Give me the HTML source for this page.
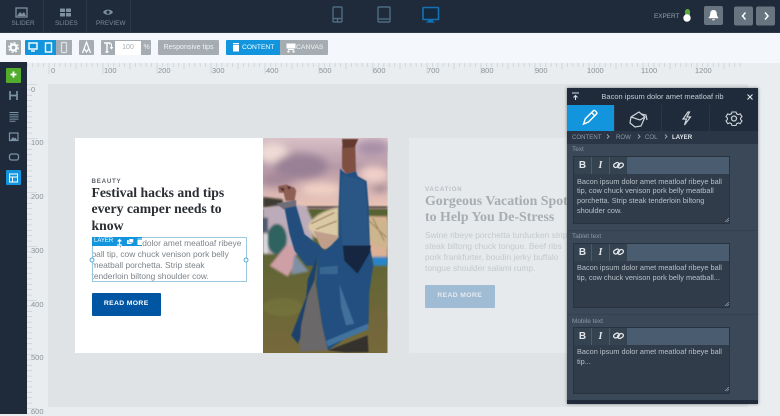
<!DOCTYPE html>
<html><head><meta charset="utf-8">
<style>
html,body{margin:0;padding:0}
body{width:780px;height:414px;overflow:hidden;position:relative;background:#e9edf0;font-family:"Liberation Sans",sans-serif}
.a{position:absolute}
.t{position:absolute;white-space:nowrap}
.serif{font-family:"Liberation Serif",serif;font-weight:700}
.g{background:#a6adb2}
.rl{position:absolute;font-size:7.5px;color:#8a9196}
.lb{position:absolute;left:572px;font-size:6.4px;color:#8b97a3}
.btn{position:absolute;width:17px;height:17px;background:#35424f;color:#dfe5ea;text-align:center;line-height:17px;font-size:10px;font-weight:700}
.txt{margin:0;position:absolute;left:3px;top:19.5px;font-size:7.35px;line-height:9.8px;color:#b7c0c9;white-space:nowrap}
.box{position:absolute;left:573px;width:157px;background:#303c4a;border:1px solid #28333f;box-sizing:border-box}
</style></head><body>

<!-- top bar -->
<div class="a" style="left:0;top:0;width:780px;height:32px;background:#1f2b3a"></div>
<div class="a" style="left:0;top:32px;width:780px;height:1px;background:#2e3a48"></div>
<div class="a" style="left:43px;top:0;width:1px;height:32px;background:#2c3847"></div>
<div class="a" style="left:86px;top:0;width:1px;height:32px;background:#2c3847"></div>
<div class="a" style="left:130px;top:0;width:1px;height:32px;background:#2c3847"></div>
<svg class="a" style="left:0;top:0" width="780" height="33">
 <rect x="16" y="8" width="11" height="9" fill="none" stroke="#7f909f" stroke-width="1.300"/>
 <path d="M17 16l3-4 2 2 2-2 2 4z" fill="#7f909f"/>
 <g fill="#7f909f"><rect x="60" y="8.500" width="5" height="3.500" rx=".5"/><rect x="66" y="8.500" width="5" height="3.500" rx=".5"/><rect x="60" y="13" width="5" height="3.500" rx=".5"/><rect x="66" y="13" width="5" height="3.500" rx=".5"/></g>
 <path d="M103 12.200c2-3.400 8-3.400 10 0-2 3.400-8 3.400-10 0z" fill="#7f909f"/><circle cx="108" cy="12.200" r="1.600" fill="#1f2b3a"/>
 <g fill="none" stroke="#4f6b82" stroke-width="1.400">
  <rect x="333" y="7" width="9" height="15" rx="1"/><path d="M333 18.500h9M337.500 18.500v3.500"/>
  <rect x="378" y="7" width="12" height="15" rx="1"/><path d="M378 19h12"/>
 </g>
 <rect x="423" y="7.500" width="15.500" height="12" rx=".5" fill="#14293e" stroke="#1670b4" stroke-width="1.600"/>
 <path d="M428 20h5v2h-5z" fill="#1670b4"/>
 <rect x="426.500" y="21.500" width="8" height="1.200" fill="#1670b4"/>
 <rect x="685" y="9" width="5" height="11" rx="2.500" fill="#5fa83a"/><circle cx="687" cy="18" r="3.700" fill="#fff"/>
 <rect x="704" y="6" width="19" height="19" rx="2" fill="#68747f"/>
 <path d="M713.500 10c-2.300 0-3.300 1.800-3.300 3.800 0 2-.7 3-1.500 3.700v.8h9.600v-.8c-.8-.7-1.500-1.700-1.500-3.700 0-2-1-3.800-3.300-3.800z" fill="#fff"/><path d="M712 19.200h3c0 1.600-3 1.600-3 0z" fill="#fff"/>
 <rect x="734" y="6.500" width="19" height="19" rx="2" fill="#68747f"/>
 <rect x="756" y="6.500" width="19" height="19" rx="2" fill="#68747f"/>
 <path d="M745.500 12.500l-3 3.500 3 3.500M765 12.500l3 3.500-3 3.500" fill="none" stroke="#fff" stroke-width="1.500"/>
</svg>
<div class="t" style="left:11.500px;top:20px;font-size:6.400px;color:#7c8a97">SLIDER</div>
<div class="t" style="left:55px;top:20px;font-size:6.400px;color:#7c8a97">SLIDES</div>
<div class="t" style="left:96px;top:20px;font-size:6.400px;color:#7c8a97">PREVIEW</div>
<div class="t" style="left:654px;top:12.500px;font-size:6.400px;color:#94a0ab">EXPERT</div>

<!-- toolbar -->
<div class="a" style="left:0;top:33px;width:780px;height:29.500px;background:#f4f7fb"></div>
<div class="a g" style="left:6px;top:40px;width:15px;height:15px;border-radius:1px"></div>
<div class="a" style="left:25px;top:40px;width:31px;height:15px;background:#1295dd;border-radius:1px 0 0 1px"></div>
<div class="a g" style="left:56px;top:40px;width:16px;height:15px"></div>
<div class="a g" style="left:79px;top:40px;width:15px;height:15px;border-radius:1px"></div>
<div class="a g" style="left:101px;top:40px;width:50px;height:15px;border-radius:1px"></div>
<div class="a" style="left:115px;top:41px;width:26px;height:14px;background:#fff;color:#a8adb2;font-size:7px;line-height:14px;text-align:center">100</div>
<div class="t" style="left:143.500px;top:43.500px;font-size:7px;color:#f1f3f4">%</div>
<div class="a g" style="left:158px;top:40px;width:61px;height:15px;border-radius:1px;color:#eef1f3;font-size:7.100px;line-height:15px;text-align:center;white-space:nowrap">Responsive tips</div>
<div class="a" style="left:226px;top:40px;width:54px;height:15px;background:#1295dd;border-radius:1px 0 0 1px"></div>
<div class="a g" style="left:280px;top:40px;width:48px;height:15px;border-radius:0 1px 1px 0"></div>
<div class="t" style="left:242px;top:43.500px;font-size:6.700px;color:#fff">CONTENT</div>
<div class="t" style="left:296px;top:43.500px;font-size:6.800px;color:#f1f3f4">CANVAS</div>
<svg class="a" style="left:0;top:33px" width="340" height="30">
 <circle cx="13.500" cy="14.500" r="3" fill="none" stroke="#fff" stroke-width="2.200"/><circle cx="13.500" cy="14.500" r="4.800" fill="none" stroke="#fff" stroke-width="1.200" stroke-dasharray="2 1.770"/>
 <rect x="29" y="10" width="8" height="6" fill="none" stroke="#fff" stroke-width="1.400"/><path d="M31 18h4" stroke="#fff" stroke-width="1.400"/>
 <rect x="45.500" y="10" width="6" height="9" fill="none" stroke="#fff" stroke-width="1.400"/>
 <rect x="61.500" y="9.500" width="5" height="10" rx="1" fill="none" stroke="#dfe3e6" stroke-width="1.200"/>
 <path d="M82.500 20l4-11 4 11M84.500 16l2 3 2-3" fill="none" stroke="#fff" stroke-width="1.200"/>
 <path d="M104 10h6v1.500M107 10v9M105.500 19h3" fill="none" stroke="#fff" stroke-width="1.400"/><path d="M111.500 10.500v5m-1.300-1.500l1.300 1.800 1.300-1.800" fill="none" stroke="#fff" stroke-width="1"/>
 <path d="M233 12h6v6.500h-6zM233 10h6v1.200h-6z" fill="#fff"/>
 <path d="M286.500 10.500h9v5h-9zM288 16h6v1h-6zM287.500 17.500h2v2h-2zM292.500 17.500h2v2h-2z" fill="#fff"/>
</svg>

<!-- ruler -->
<div class="a" style="left:27px;top:63px;width:753px;height:21px;background:#e9edf0"></div>
<svg class="a" style="left:27px;top:62px" width="753" height="22">
 <defs><pattern id="rx" x="21.500" y="0" width="54" height="22" patternUnits="userSpaceOnUse">
  <path fill="none" stroke="#cdd2d5" stroke-width=".8" d="M.5 1v11M5.900 1v4M11.300 1v4M16.700 1v4M22.100 1v4M27.500 1v6M32.900 1v4M38.300 1v4M43.700 1v4M49.100 1v4"/>
 </pattern></defs>
 <rect x="0" y="0" width="714" height="22" fill="url(#rx)"/>
</svg>
<span class="rl" style="left:51px;top:66px">0</span><span class="rl" style="left:104px;top:66px">100</span><span class="rl" style="left:158px;top:66px">200</span><span class="rl" style="left:212px;top:66px">300</span><span class="rl" style="left:266px;top:66px">400</span><span class="rl" style="left:319px;top:66px">500</span><span class="rl" style="left:373px;top:66px">600</span><span class="rl" style="left:427px;top:66px">700</span><span class="rl" style="left:481px;top:66px">800</span><span class="rl" style="left:535px;top:66px">900</span><span class="rl" style="left:587px;top:66px">1000</span><span class="rl" style="left:641px;top:66px">1100</span><span class="rl" style="left:695px;top:66px">1200</span>
<svg class="a" style="left:27px;top:84px" width="21" height="330">
 <defs><pattern id="ry" x="0" y="0" width="21" height="54" patternUnits="userSpaceOnUse">
  <path fill="none" stroke="#cdd2d5" stroke-width=".8" d="M0 .5h10M0 5.900h5M0 11.300h5M0 16.700h5M0 22.100h5M0 27.500h5M0 32.900h5M0 38.300h5M0 43.700h5M0 49.100h5"/>
 </pattern></defs>
 <rect width="21" height="330" fill="url(#ry)"/>
</svg>
<span class="rl" style="left:31px;top:85px">0</span><span class="rl" style="left:31px;top:138px">100</span><span class="rl" style="left:31px;top:192px">200</span><span class="rl" style="left:31px;top:246px">300</span><span class="rl" style="left:31px;top:300px">400</span><span class="rl" style="left:31px;top:353px">500</span><span class="rl" style="left:31px;top:407px">600</span>

<!-- sidebar -->
<div class="a" style="left:0;top:62px;width:27px;height:352px;background:#1f2b3a"></div>
<div class="a" style="left:6px;top:68px;width:15px;height:15px;background:#53ad2c;border-radius:1px"></div>
<div class="a" style="left:6px;top:170px;width:15px;height:15px;background:#1295dd;border-radius:1px"></div>
<svg class="a" style="left:0;top:62px" width="27" height="130">
 <path d="M13.500 9.500v6M10.500 12.500h6" stroke="#fff" stroke-width="1.800"/>
 <path d="M10 29v9M17 29v9M10 33.500h7" stroke="#7a93a6" stroke-width="1.700" fill="none"/>
 <path d="M9.500 50.500h9M9.500 52.700h9M9.500 54.900h9M9.500 57.100h9M9.500 59.300h6" stroke="#7a93a6" stroke-width="1" fill="none"/>
 <rect x="9.500" y="71" width="8.500" height="7.500" fill="none" stroke="#7a93a6" stroke-width="1.200"/><path d="M10.500 78l2.500-3 1.500 1.500 1-1 1.500 2.500z" fill="#7a93a6"/>
 <rect x="9.500" y="92" width="9" height="6" rx="2" fill="none" stroke="#7a93a6" stroke-width="1.300"/>
 <rect x="9.500" y="112" width="8" height="8" fill="none" stroke="#fff" stroke-width="1"/><path d="M9.500 115h8M12.500 115v5" stroke="#fff" stroke-width="1"/>
</svg>

<!-- canvas -->
<div class="a" style="left:48px;top:84px;width:700px;height:322.500px;background:#dfe3e5"></div>

<!-- card 1 -->
<div class="a" style="left:75px;top:138px;width:188px;height:215px;background:#fff"></div>
<div class="t" style="left:91.500px;top:177.500px;font-size:6.200px;letter-spacing:.75px;font-weight:700;color:#5d636b">BEAUTY</div>
<div class="t serif" style="left:91.500px;top:185px;font-size:13.700px;line-height:16.300px;color:#2a2e33">Festival hacks and tips<br>every camper needs to<br>know</div>
<div class="t" style="left:91.500px;top:237.500px;font-size:8.400px;line-height:11.300px;color:#7d848a">Bacon ipsum dolor amet meatloaf ribeye<br>ball tip, cow chuck venison pork belly<br>meatball porchetta. Strip steak<br>tenderloin biltong shoulder cow.</div>
<div class="a" style="left:91.500px;top:237px;width:155px;height:45px;border:1px solid #9cc8dd;box-sizing:border-box"></div>
<div class="a" style="left:91.500px;top:237px;width:50.500px;height:9px;background:#1295dd"></div>
<div class="t" style="left:94px;top:237.500px;font-size:6px;color:#fff">LAYER</div>
<svg class="a" style="left:88px;top:236px" width="162" height="28">
 <path d="M29 9h5M31.500 8.500v-5m-1.800 2l1.800-2 1.800 2" fill="none" stroke="#fff" stroke-width="1.200"/>
 <rect x="39" y="4" width="4.500" height="4" fill="#fff"/><rect x="41" y="2.800" width="4.500" height="4" fill="#fff" stroke="#1295dd" stroke-width=".5"/>
 <rect x="49.500" y="4" width="5" height="5" fill="#fff"/><rect x="49.500" y="2.600" width="5" height=".8" fill="#fff"/>
 <circle cx="4" cy="24" r="2" fill="#fff" stroke="#45a5d8" stroke-width=".9"/><circle cx="158" cy="24" r="2" fill="#fff" stroke="#45a5d8" stroke-width=".9"/>
</svg>
<div class="a" style="left:91.500px;top:293px;width:69.500px;height:22.500px;background:#0056a3;border-radius:1px;color:#fff;font-size:6.800px;font-weight:700;letter-spacing:.35px;text-align:center;line-height:22.500px;white-space:nowrap">READ MORE</div>

<!-- photo -->
<svg class="a" style="left:263px;top:138px" width="124.500" height="215" viewBox="0 0 375 648" preserveAspectRatio="none">
 <defs>
  <linearGradient id="sky" x1="0" y1="0" x2="0" y2="1"><stop offset="0" stop-color="#d8c0c6"/><stop offset=".4" stop-color="#b79aa8"/><stop offset=".8" stop-color="#ddb8b4"/><stop offset="1" stop-color="#edc8b4"/></linearGradient>
  <linearGradient id="gr" x1="0" y1="0" x2="0" y2="1"><stop offset="0" stop-color="#566233"/><stop offset="1" stop-color="#76693a"/></linearGradient>
  <filter id="b1" x="-30%" y="-30%" width="160%" height="160%"><feGaussianBlur stdDeviation="12"/></filter>
  <filter id="b2" x="-10%" y="-10%" width="120%" height="120%"><feGaussianBlur stdDeviation="3"/></filter>
  <filter id="b3" x="-10%" y="-10%" width="120%" height="120%"><feGaussianBlur stdDeviation="1.500"/></filter>
 </defs>
 <rect width="375" height="215" fill="url(#sky)"/>
 <g filter="url(#b1)">
  <ellipse cx="30" cy="45" rx="45" ry="30" fill="#efdcd6"/>
  <ellipse cx="115" cy="85" rx="80" ry="38" fill="#9a8095"/>
  <ellipse cx="40" cy="125" rx="55" ry="22" fill="#a58899"/>
  <ellipse cx="175" cy="155" rx="60" ry="20" fill="#f0d2c5"/>
  <ellipse cx="330" cy="30" rx="50" ry="24" fill="#a990a8"/>
  <ellipse cx="335" cy="110" rx="45" ry="26" fill="#f0d0c8"/>
  <ellipse cx="352" cy="150" rx="22" ry="10" fill="#8f7e8a"/>
 </g>
 <path d="M0 178L60 185V210H0z" fill="#3c3a30" filter="url(#b2)"/>
 <rect x="130" y="205" width="245" height="10" fill="#5f5150" filter="url(#b2)"/>
 <rect y="215" width="375" height="433" fill="url(#gr)"/>
 <g filter="url(#b2)">
  <path d="M0 212Q60 195 130 205L150 250V350H0z" fill="#bcabb8"/>
  <path d="M0 240H15V285H0z" fill="#4c5a75"/>
  <ellipse cx="42" cy="305" rx="30" ry="46" fill="#2d6360"/>
  <rect x="0" y="290" width="14" height="58" fill="#dcdcde"/>
  <path d="M70 324L20 385 75 418 100 372V324z" fill="#cf9fa6"/>
  <path d="M95 350L138 402 85 412z" fill="#7f8fa4"/>
  <rect x="318" y="236" width="57" height="124" fill="#dcb095"/>
  <rect x="330" y="358" width="45" height="27" fill="#2b84c8"/>
  <ellipse cx="60" cy="510" rx="60" ry="28" fill="#7a7a3e" opacity=".5"/>
  <ellipse cx="345" cy="560" rx="30" ry="50" fill="#74663a" opacity=".7"/>
 </g>
 <!-- hair -->
 <path d="M135 268Q150 225 228 208L228 305 155 300z" fill="#dbc9a6" filter="url(#b2)"/>
 <path d="M312 235L375 250V335L340 326 312 300z" fill="#cdb58e" filter="url(#b2)"/>
 <path d="M152 280L228 295V345L175 332z" fill="#c09f8a" filter="url(#b3)"/>
 <path d="M145 258L215 225M160 275L222 250M320 250L372 300M330 240L365 310" stroke="#a88f68" stroke-width="4" fill="none" filter="url(#b3)"/>
 <g filter="url(#b3)">
  <path d="M238 25L278 25 280 100 250 108 238 90z" fill="#7f5042"/>
  <path d="M238 3L287 3 276 28 240 30z" fill="#633a2e"/>
  <path d="M45 145L70 140 95 150 100 160 95 188 68 190 62 165 48 165z" fill="#8e5f52"/>
  <path d="M50 150l14 2-2 10zM72 145l12 3-6 8z" fill="#3d2b2b"/>
  <path d="M40 197L100 187 100 208 62 215z" fill="#6f6c78"/>
  <path d="M65 212L100 205 125 290 170 324 185 340 165 354 155 385 130 385 95 340 80 290z" fill="#244e7c"/>
  <path d="M232 92L250 108 280 100 285 115 312 130 318 200 322 324 332 384 320 465 318 560 270 590 195 640 178 565 160 440 165 354 205 324 228 300 228 200z" fill="#24507f"/>
  <path d="M165 354L135 425 130 480 85 595 105 620 130 560 155 430z" fill="#1e426c"/>
  <path d="M238 110L305 130 312 200 318 324H240L232 210z" fill="#2a5685"/>
  <path d="M240 324L325 324 322 345 285 409 245 370z" fill="#172640"/>
  <path d="M170 390L225 385 225 410 172 410z" fill="#386792"/>
  <path d="M230 440L245 480 275 560 250 565 235 510z" fill="#3f6f9b"/>
  <path d="M190 612L315 560 318 576 195 628z" fill="#42739f"/>
  <path d="M155 429L178 565 195 640 110 644 115 565 135 475z" fill="#6b6868"/>
  <path d="M195 640L315 595 318 645 250 646z" fill="#35322f"/>
 </g>
</svg>

<!-- card 2 -->
<div class="a" style="left:409px;top:138px;width:160px;height:215px;background:#e6eaed"></div>
<div class="t" style="left:425px;top:186px;font-size:6.200px;letter-spacing:.75px;font-weight:700;color:#bcc0c4">VACATION</div>
<div class="a" style="left:425px;top:193.500px;width:144px;height:90px;overflow:hidden">
<div class="t serif" style="left:0;top:0;font-size:13.900px;line-height:16.300px;color:#a8adb1">Gorgeous Vacation Spots<br>to Help You De-Stress</div>
<div class="t" style="left:0;top:36px;font-size:8.400px;line-height:11.300px;color:#c4c9cc">Swine ribeye porchetta turducken strip<br>steak biltong chuck tongue. Beef ribs<br>pork frankfurter, boudin jerky buffalo<br>tongue shoulder salami rump.</div>
</div>
<div class="a" style="left:425px;top:285px;width:69.500px;height:22.500px;background:#a0bbd4;border-radius:1px;color:#e6eaed;font-size:6.800px;font-weight:700;letter-spacing:.35px;text-align:center;line-height:22.500px;white-space:nowrap">READ MORE</div>

<!-- panel -->
<div class="a" style="left:567px;top:88px;width:191px;height:316px;background:#3b4858;box-shadow:0 0 3px rgba(20,30,40,.5)"></div>
<div class="a" style="left:567px;top:88px;width:191px;height:43px;background:#1f2b3a"></div>
<div class="t" style="left:567px;top:92px;width:191px;text-align:center;font-size:7.500px;color:#c5ccd3">Bacon ipsum dolor amet meatloaf rib</div>
<div class="a" style="left:567px;top:105px;width:47px;height:26px;background:#1295dd"></div>
<div class="a" style="left:567px;top:131px;width:191px;height:12.500px;background:#2a3645"></div>
<div class="a" style="left:661px;top:105px;width:1px;height:26px;background:#2a3645"></div>
<div class="a" style="left:709px;top:105px;width:1px;height:26px;background:#2a3645"></div>
<div class="a" style="left:614px;top:105px;width:1px;height:26px;background:#2a3645"></div>
<div class="t" style="left:572px;top:133.500px;font-size:6.100px;color:#8f9ba7">CONTENT</div>
<div class="t" style="left:616px;top:133.500px;font-size:6.100px;color:#8f9ba7">ROW</div>
<div class="t" style="left:645px;top:133.500px;font-size:6.100px;color:#8f9ba7">COL</div>
<div class="t" style="left:672px;top:133.500px;font-size:6.100px;color:#dfe5ea;font-weight:700">LAYER</div>
<svg class="a" style="left:567px;top:88px" width="191" height="56">
 <path d="M5 5h7M8.500 12V7.500m-2 2l2-2 2 2" fill="none" stroke="#d6dce2" stroke-width="1.100"/>
 <path d="M180.500 6.500l5 5M185.500 6.500l-5 5" stroke="#e4e8ec" stroke-width="1.100"/>
 <path d="M16.500 36l1.800-5.200 8.200-8.200c1-1 4.200 2.200 3.200 3.200l-8.200 8.200zM24.500 24.500l3.200 3.200" fill="none" stroke="#fff" stroke-width="1.400"/>
 <g transform="translate(0,9)" fill="none" stroke="#cdd4da" stroke-width="1.200"><path d="M64 20l8-5 6 5-4 9-6 1-5-4zM64 20l9 3 5-3"/><path d="M74 17l5 1 1 5"/></g>
 <path d="M121 24l-5 7h3.500l-2 6 6-8h-3.500l2.500-5z" fill="none" stroke="#cdd4da" stroke-width="1.200"/>
 <g transform="translate(0,8.500)" fill="none" stroke="#cdd4da"><circle cx="167" cy="22" r="2.500" stroke-width="1.200"/>
 <path d="M165 15.500h4l.6 1.800 1.800.8 1.800-.8 1.800 2.800-1.400 1.400v1.500l1.400 1.400-1.800 2.800-1.800-.8-1.800.8-.6 1.800h-4l-.6-1.800-1.800-.8-1.800.8-1.800-2.800 1.400-1.400v-1.500l-1.400-1.400 1.800-2.800 1.800.8 1.800-.8z" stroke-width="1.100"/></g>
 <path d="M40 46.500l2 2-2 2M71 46.500l2 2-2 2M98 46.500l2 2-2 2" fill="none" stroke="#9aa6b1" stroke-width=".9"/>
</svg>

<div class="lb" style="top:146px">Text</div>
<div class="lb" style="top:233px">Tablet text</div>
<div class="lb" style="top:317.500px">Mobile text</div>
<div class="a" style="left:567px;top:229.500px;width:191px;height:1px;background:#344150"></div>
<div class="a" style="left:567px;top:313.500px;width:191px;height:1px;background:#344150"></div>

<div class="box" style="top:156px;height:68px"><p class="txt">Bacon ipsum dolor amet meatloaf ribeye ball<br>tip, cow chuck venison pork belly meatball<br>porchetta. Strip steak tenderloin biltong<br>shoulder cow.</p></div>
<div class="box" style="top:242.500px;height:65px"><p class="txt">Bacon ipsum dolor amet meatloaf ribeye ball<br>tip, cow chuck venison pork belly meatball...</p></div>
<div class="box" style="top:326.500px;height:67px"><p class="txt">Bacon ipsum dolor amet meatloaf ribeye ball<br>tip...</p></div>

<div class="a" style="left:574px;top:157px;width:155px;height:17px;background:#4a5c70"></div>
<div class="a" style="left:574px;top:243.500px;width:155px;height:17px;background:#4a5c70"></div>
<div class="a" style="left:574px;top:327.500px;width:155px;height:17px;background:#4a5c70"></div>

<div class="btn" style="left:574px;top:157px">B</div><div class="btn" style="left:592px;top:157px;font-style:italic;font-family:'Liberation Serif',serif">I</div><div class="btn" style="left:610px;top:157px"></div>
<div class="btn" style="left:574px;top:243.500px">B</div><div class="btn" style="left:592px;top:243.500px;font-style:italic;font-family:'Liberation Serif',serif">I</div><div class="btn" style="left:610px;top:243.500px"></div>
<div class="btn" style="left:574px;top:327.500px">B</div><div class="btn" style="left:592px;top:327.500px;font-style:italic;font-family:'Liberation Serif',serif">I</div><div class="btn" style="left:610px;top:327.500px"></div>

<svg class="a" style="left:567px;top:150px" width="170" height="250">
 <g fill="none" stroke="#e4e8ec" stroke-width="1.300">
  <g><rect x="46.500" y="13" width="6" height="4" rx="2" transform="rotate(-30 49.500 15)"/><rect x="50.500" y="13.500" width="6" height="4" rx="2" transform="rotate(-30 53.500 15.500)"/></g>
  <g transform="translate(0,86.500)"><rect x="46.500" y="13" width="6" height="4" rx="2" transform="rotate(-30 49.500 15)"/><rect x="50.500" y="13.500" width="6" height="4" rx="2" transform="rotate(-30 53.500 15.500)"/></g>
  <g transform="translate(0,170.500)"><rect x="46.500" y="13" width="6" height="4" rx="2" transform="rotate(-30 49.500 15)"/><rect x="50.500" y="13.500" width="6" height="4" rx="2" transform="rotate(-30 53.500 15.500)"/></g>
 </g>
 <g stroke="#8b97a3" stroke-width=".8">
  <path d="M158 72l4-4M160 72l2-2"/><path d="M158 156l4-4M160 156l2-2"/><path d="M158 241l4-4M160 241l2-2"/>
 </g>
</svg>
<div class="a" style="left:567px;top:400px;width:191px;height:4px;background:#1f2b3a"></div>
</body></html>
